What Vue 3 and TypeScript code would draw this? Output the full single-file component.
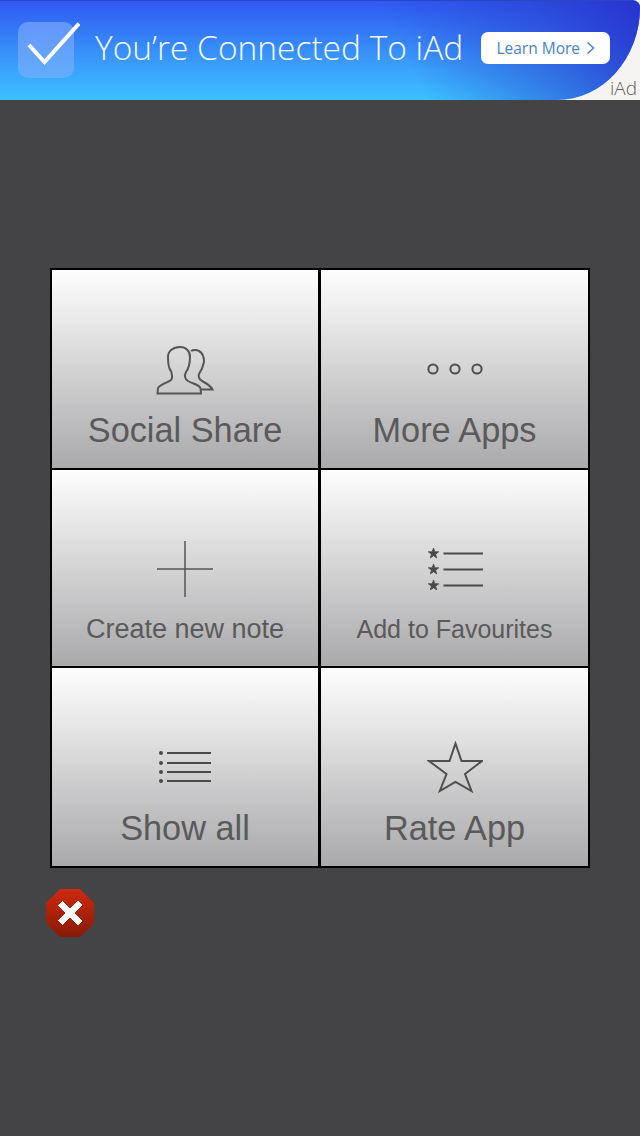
<script setup lang="ts">
interface Tile { label: string; icon: string; size: string }
const tiles: Tile[] = [
  { label: 'Social Share', icon: 'people', size: 'large' },
  { label: 'More Apps', icon: 'dots', size: 'large' },
  { label: 'Create new note', icon: 'plus', size: 'note' },
  { label: 'Add to Favourites', icon: 'stars', size: 'fav' },
  { label: 'Show all', icon: 'list', size: 'large' },
  { label: 'Rate App', icon: 'star', size: 'large' }
]
const starPath = 'M0 -4.4 L1.1 -1.4 L4.2 -1.4 L1.7 0.5 L2.6 3.6 L0 1.8 L-2.6 3.6 L-1.7 0.5 L-4.2 -1.4 L-1.1 -1.4 Z'
</script>

<template>
  <div class="page">
    <header class="ad">
      <div class="ad-blue">
        <div class="ad-icon">
          <svg class="check" width="62" height="46" viewBox="0 0 62 46">
            <path d="M11 23 L26.5 40 L61 1.5" fill="none" stroke="#fff" stroke-width="4" />
          </svg>
        </div>
        <span class="ad-title">You’re Connected To iAd</span>
        <span class="ad-btn">Learn More
          <svg width="9" height="14" viewBox="0 0 9 14"><path d="M1.5 1.5 L7.5 7 L1.5 12.5" fill="none" stroke="#4a84c4" stroke-width="1.5" /></svg>
        </span>
      </div>
      <span class="ad-mark">iAd</span>
    </header>

    <main class="menu">
      <div class="grid">
        <button v-for="t in tiles" :key="t.label" class="tile" type="button">
          <span class="ico">
            <svg v-if="t.icon === 'people'" class="people" width="60" height="50" viewBox="0 0 60 50" fill="none" stroke="#555" stroke-width="2">
              <path d="M2.5 47.5 L3 42 C6 38 12 37 16 34 C18 32 17 28 16 25 C13 22 13 16 13 11 C13 5 18 1 25 1 C31 1 35 5 35 11 C35 16 34 22 31 26 C29 30 30 33 33 35 C38 38 43 38 45.5 42 L46 47.5 Z" />
              <path d="M36 5 C38 3.5 42 3.5 44 5 C48 7 49 12 49 16 C48 21 46 25 44 28 C43 31 44 33 47 35 C51 37 55 39 57.5 43.5 H46" />
            </svg>
            <svg v-else-if="t.icon === 'dots'" width="56" height="14" viewBox="0 0 56 14" fill="none" stroke="#4f4f4f" stroke-width="2">
              <circle cx="6" cy="7" r="4.6" /><circle cx="28" cy="7" r="4.6" /><circle cx="50" cy="7" r="4.6" />
            </svg>
            <svg v-else-if="t.icon === 'plus'" width="56" height="56" viewBox="0 0 56 56" stroke="#555" stroke-width="1.5">
              <path d="M28 0 V56 M0 28 H56" />
            </svg>
            <svg v-else-if="t.icon === 'stars'" width="56" height="42" viewBox="0 0 56 42">
              <g fill="#4a4a4a" stroke="#4a4a4a" stroke-width=".6">
                <path :d="starPath" transform="translate(6.5 5.5) scale(1.25)" />
                <path :d="starPath" transform="translate(6.5 21.5) scale(1.25)" />
                <path :d="starPath" transform="translate(6.5 37.5) scale(1.25)" />
              </g>
              <path d="M16.5 5.5 H56 M16.5 21.5 H56 M16.5 37.5 H56" stroke="#4a4a4a" stroke-width="2" />
            </svg>
            <svg v-else-if="t.icon === 'list'" width="54" height="34" viewBox="0 0 54 34">
              <g fill="#4a4a4a"><circle cx="3" cy="3" r="2" /><circle cx="3" cy="13" r="2" /><circle cx="3" cy="22" r="2" /><circle cx="3" cy="31" r="2" /></g>
              <path d="M9 3 H53 M9 13 H53 M9 22 H53 M9 31 H53" stroke="#4a4a4a" stroke-width="2" />
            </svg>
            <svg v-else width="56" height="52" viewBox="0 0 56 52" fill="none" stroke="#4f4f4f" stroke-width="2">
              <path d="M28.5 2.5 L34.5 20 H55 L38 33 L44.5 50 L28.5 41 L12.8 50 L19.5 33 L2 20 H22.5 Z" />
            </svg>
          </span>
          <span class="label" :class="t.size">{{ t.label }}</span>
        </button>
      </div>
      <div class="close" aria-label="Close">
        <svg width="50" height="50" viewBox="0 0 50 50">
          <defs>
            <linearGradient id="closeFill" x1="0" y1="0" x2="0" y2="1">
              <stop offset="0" stop-color="#cc2a0e" /><stop offset="1" stop-color="#8a1a06" />
            </linearGradient>
          </defs>
          <path d="M15 1 H35 L49 15 V35 L35 49 H15 L1 35 V15 Z" fill="url(#closeFill)" />
          <path d="M13 17 L17 13 L25 20 L33 13 L37 17 L30 25 L37 33 L33 37 L25 30 L17 37 L13 33 L20 25 Z" fill="#fff" shape-rendering="crispEdges" />
        </svg>
      </div>
    </main>
  </div>
</template>

<style>
html, body { margin: 0; padding: 0; background: #444345; }
</style>

<style scoped>
.page {
  width: 640px;
  height: 1136px;
  background: #444345;
  overflow: hidden;
}
.ad {
  position: relative;
  height: 100px;
  background: #f6f4f2;
}
.ad-blue {
  height: 100px;
  box-sizing: border-box;
  padding-left: 18px;
  display: flex;
  align-items: center;
  border-radius: 0 8px 90px 0 / 0 8px 100px 0;
  border-top: 1px solid #2a46c0;
  background:
    linear-gradient(245deg, rgba(40, 50, 205, .95) 0%, rgba(40, 60, 205, .55) 16%, rgba(50, 80, 220, 0) 38%),
    linear-gradient(180deg, #2f59f2 0%, #3a9bfb 62%, #3bc2ff 100%);
}
.ad-icon {
  position: relative;
  width: 56px;
  height: 56px;
  margin-top: -1px;
  border-radius: 10px;
  background: linear-gradient(180deg, #6496fb, #63adfc);
  flex: none;
}
.check {
  position: absolute;
  left: 0;
  top: 0;
}
.ad-title {
  margin-left: 21px;
  color: #f4fbff;
  font: 300 33.5px "Open Sans", sans-serif;
  white-space: nowrap;
  margin-top: -7px;
}
.ad-btn {
  margin-left: 18px;
  margin-top: -5px;
  width: 129px;
  height: 32px;
  box-sizing: border-box;
  border-radius: 7px;
  background: #fff;
  color: #4a84c4;
  font: 400 15.5px "Open Sans", sans-serif;
  display: flex;
  align-items: center;
  justify-content: center;
  gap: 6px;
  flex: none;
}
.ad-mark {
  position: absolute;
  right: 3px;
  bottom: 1px;
  color: #5f5c5a;
  font: 300 19px/22px "Open Sans", sans-serif;
}
.menu {
  padding: 168px 50px 0;
}
.grid {
  width: 540px;
  height: 600px;
  box-sizing: border-box;
  border: 2px solid #000;
  background: #000;
  display: grid;
  grid-template-columns: 266px 267px;
  grid-template-rows: 198px 196px 198px;
  column-gap: 3px;
  row-gap: 2px;
}
.tile {
  padding: 69px 0 0;
  border: 0;
  background: linear-gradient(180deg, #fdfdfe 0%, #f4f4f5 12%, #a9a8aa 100%);
  display: flex;
  flex-direction: column;
  align-items: center;
  height: 100%;
  box-sizing: border-box;
  width: 100%;
}
.ico {
  height: 60px;
  display: flex;
  align-items: center;
  justify-content: center;
  flex: none;
}
.people {
  margin-top: 3px;
}
.label {
  color: #5a5a5a;
  line-height: 40px;
  font-family: "Liberation Sans", Arial, sans-serif;
  white-space: nowrap;
  margin-top: 11px;
}
.label.large { font-size: 34.3px; }
.label.note { font-size: 27px; margin-top: 10px; }
.label.fav { font-size: 25px; margin-top: 10px; }
.close {
  margin: 20px 0 0 -5px;
  width: 50px;
  height: 50px;
}
</style>
